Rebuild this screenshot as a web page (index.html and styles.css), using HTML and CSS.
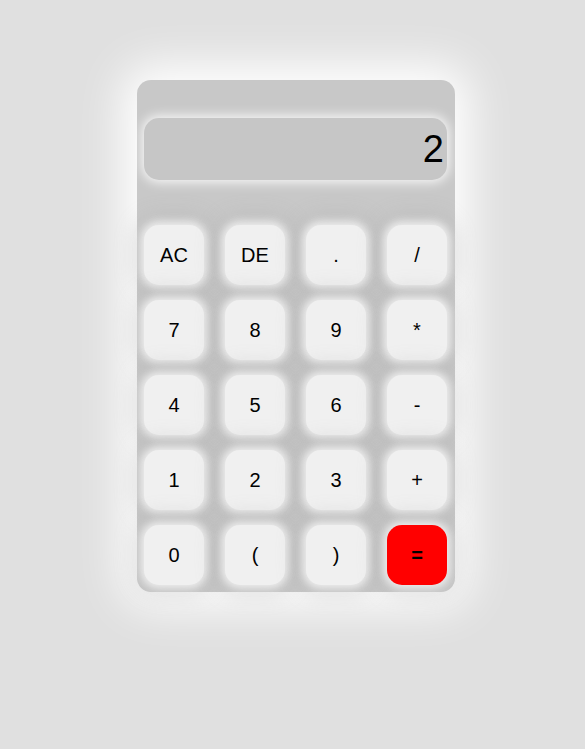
FILE: index.html
```html
<!DOCTYPE html>
<html>
<head>
<meta charset="utf-8">
<link rel="stylesheet" href="styles.css">
</head>
<body>
<div class="page">
  <div class="calc">
    <div class="display">2</div>
    <div class="keys">
      <button class="key">AC</button>
      <button class="key">DE</button>
      <button class="key">.</button>
      <button class="key">/</button>
      <button class="key">7</button>
      <button class="key">8</button>
      <button class="key">9</button>
      <button class="key">*</button>
      <button class="key">4</button>
      <button class="key">5</button>
      <button class="key">6</button>
      <button class="key">-</button>
      <button class="key">1</button>
      <button class="key">2</button>
      <button class="key">3</button>
      <button class="key">+</button>
      <button class="key">0</button>
      <button class="key">(</button>
      <button class="key">)</button>
      <button class="key equal">=</button>
    </div>
  </div>
</div>
</body>
</html>
```
FILE: styles.css
```css
html, body {
  margin: 0;
  padding: 0;
  background: #e0e0e0;
  font-family: "Liberation Sans", Arial, sans-serif;
}
.page {
  padding: 80px 0 0 7px;
  height: 749px;
  box-sizing: border-box;
}
.calc {
  width: 318px;
  height: 512px;
  margin: 0 auto;
  background: #c8c8c8;
  border-radius: 14px;
  box-shadow: 0 0 45px 15px #ffffff;
  padding: 38px 8px 7px 7px;
  box-sizing: border-box;
}
.display {
  height: 62px;
  background: #c6c6c6;
  border-radius: 15px;
  box-shadow: 0 0 12px 2px rgba(255,255,255,0.9);
  font-size: 38px;
  line-height: 62px;
  text-align: right;
  padding-right: 3px;
  color: #000;
}
.keys {
  margin-top: 45px;
  display: grid;
  grid-template-columns: repeat(4, 60px);
  grid-auto-rows: 60px;
  column-gap: 21px;
  row-gap: 15px;
}
.key {
  border: none;
  background: #f0f0f0;
  border-radius: 15px;
  font-family: "Liberation Sans", Arial, sans-serif;
  font-size: 20px;
  color: #000;
  padding: 0;
  box-shadow: 0 0 8px 4px rgba(240,240,240,0.95), 0 0 22px 8px rgba(160,160,160,0.3);
}
.equal {
  background: #ff0000;
  font-weight: bold;
}
```
